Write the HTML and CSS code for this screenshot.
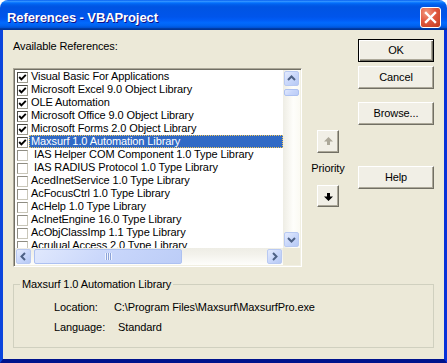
FILE: index.html
```html
<!DOCTYPE html>
<html lang="en">
<head>
    <meta charset="UTF-8">
    <title>References - VBAProject</title>
    <link rel="stylesheet" href="styles.css">
</head>
<body>
    <div class="window">
        <div class="titlebar">
            <span class="title">References - VBAProject</span>
            <button class="close-btn" aria-label="Close">
                <svg width="19" height="19" viewBox="0 0 19 19"><path d="M5 5 L14 14 M14 5 L5 14" stroke="#fff" stroke-width="2.4" stroke-linecap="square"/></svg>
            </button>
        </div>

        <div class="client">
            <div class="top-row">
                <div class="refs-col">
                    <div class="caption">Available References:</div>
                    <div class="listbox">
                        <div class="items">
                            <div class="item"><span class="check on"><svg width="9" height="9" viewBox="0 0 9 9"><polyline points="1.2,4 3.4,6.3 7.8,1.8" fill="none" stroke="#000" stroke-width="1.9"/></svg></span><span class="item-text">Visual Basic For Applications</span></div>
                            <div class="item"><span class="check on"><svg width="9" height="9" viewBox="0 0 9 9"><polyline points="1.2,4 3.4,6.3 7.8,1.8" fill="none" stroke="#000" stroke-width="1.9"/></svg></span><span class="item-text">Microsoft Excel 9.0 Object Library</span></div>
                            <div class="item"><span class="check on"><svg width="9" height="9" viewBox="0 0 9 9"><polyline points="1.2,4 3.4,6.3 7.8,1.8" fill="none" stroke="#000" stroke-width="1.9"/></svg></span><span class="item-text">OLE Automation</span></div>
                            <div class="item"><span class="check on"><svg width="9" height="9" viewBox="0 0 9 9"><polyline points="1.2,4 3.4,6.3 7.8,1.8" fill="none" stroke="#000" stroke-width="1.9"/></svg></span><span class="item-text">Microsoft Office 9.0 Object Library</span></div>
                            <div class="item"><span class="check on"><svg width="9" height="9" viewBox="0 0 9 9"><polyline points="1.2,4 3.4,6.3 7.8,1.8" fill="none" stroke="#000" stroke-width="1.9"/></svg></span><span class="item-text">Microsoft Forms 2.0 Object Library</span></div>
                            <div class="item selected"><span class="check on"><svg width="9" height="9" viewBox="0 0 9 9"><polyline points="1.2,4 3.4,6.3 7.8,1.8" fill="none" stroke="#000" stroke-width="1.9"/></svg></span><span class="item-text">Maxsurf 1.0 Automation Library</span></div>
                            <div class="item"><span class="check"></span><span class="item-text">&nbsp;IAS Helper COM Component 1.0 Type Library</span></div>
                            <div class="item"><span class="check"></span><span class="item-text">&nbsp;IAS RADIUS Protocol 1.0 Type Library</span></div>
                            <div class="item"><span class="check"></span><span class="item-text">AcedInetService 1.0 Type Library</span></div>
                            <div class="item"><span class="check"></span><span class="item-text">AcFocusCtrl 1.0 Type Library</span></div>
                            <div class="item"><span class="check"></span><span class="item-text">AcHelp 1.0 Type Library</span></div>
                            <div class="item"><span class="check"></span><span class="item-text">AcInetEngine 16.0 Type Library</span></div>
                            <div class="item"><span class="check"></span><span class="item-text">AcObjClassImp 1.1 Type Library</span></div>
                            <div class="item"><span class="check"></span><span class="item-text">Acrulual Access 2.0 Type Library</span></div>
                        </div>

                        <div class="vscroll">
                            <div class="sb-btn"><svg width="13" height="13" viewBox="0 0 13 13"><polyline points="3,8 6.5,4.5 10,8" fill="none" stroke="#4d6185" stroke-width="2"/></svg></div>
                            <div class="sb-track"><div class="sb-thumb v-thumb"></div></div>
                            <div class="sb-btn"><svg width="13" height="13" viewBox="0 0 13 13"><polyline points="3,5 6.5,8.5 10,5" fill="none" stroke="#4d6185" stroke-width="2"/></svg></div>
                        </div>

                        <div class="hscroll">
                            <div class="sb-btn"><svg width="13" height="13" viewBox="0 0 13 13"><polyline points="8,3 4.5,6.5 8,10" fill="none" stroke="#4d6185" stroke-width="2"/></svg></div>
                            <div class="sb-track h-track">
                                <div class="sb-thumb h-thumb">
                                    <span class="grip"></span>
                                </div>
                            </div>
                            <div class="sb-btn"><svg width="13" height="13" viewBox="0 0 13 13"><polyline points="5,3 8.5,6.5 5,10" fill="none" stroke="#4d6185" stroke-width="2"/></svg></div>
                        </div>
                        <div class="sb-corner"></div>
                    </div>
                </div>

                <div class="priority-col">
                    <button class="arrow-btn up-btn" disabled>
                        <svg width="9" height="9" viewBox="0 0 9 9"><polygon points="4.5,0 9,4.5 6,4.5 6,8 3,8 3,4.5 0,4.5" fill="#aca899"/></svg>
                    </button>
                    <div class="priority-label">Priority</div>
                    <button class="arrow-btn down-btn">
                        <svg width="9" height="9" viewBox="0 0 9 9"><polygon points="4.5,9 9,4.5 6,4.5 6,1 3,1 3,4.5 0,4.5" fill="#000"/></svg>
                    </button>
                </div>

                <div class="buttons-col">
                    <button class="btn default">OK</button>
                    <button class="btn cancel">Cancel</button>
                    <button class="btn browse">Browse...</button>
                    <button class="btn help">Help</button>
                </div>
            </div>

            <fieldset class="details">
                <legend>Maxsurf 1.0 Automation Library</legend>
                <div class="detail-row">
                    <span class="detail-label">Location:</span>
                    <span class="detail-value">C:\Program Files\Maxsurf\MaxsurfPro.exe</span>
                </div>
                <div class="detail-row">
                    <span class="detail-label">Language:</span>
                    <span class="detail-value lang">Standard</span>
                </div>
            </fieldset>
        </div>
    </div>
</body>
</html>
```

FILE: styles.css
```css
body {
    margin: 0;
    background-color: #fff;
    font-family: "Liberation Sans", Arial, sans-serif;
    font-size: 11px;
    letter-spacing: -0.1px;
    color: #000;
}
button {
    font-family: inherit;
    font-size: inherit;
    letter-spacing: inherit;
    color: inherit;
    padding: 0;
}
.window {
    width: 447px;
    height: 363px;
    display: flex;
    flex-direction: column;
}
.titlebar {
    height: 30px;
    flex: none;
    display: flex;
    justify-content: space-between;
    align-items: flex-start;
    padding: 0 6px 0 7px;
    border-radius: 8px 8px 0 0;
    background: linear-gradient(to bottom, #0058ee 0%, #3593ff 4%, #288eff 6%, #127dff 8%, #036ffc 10%, #0262ee 14%, #0057e5 20%, #0054e3 24%, #0055eb 56%, #005bf5 66%, #026afe 76%, #0062ef 86%, #0052d6 92%, #0040ab 94%, #003092 100%);
}
.title {
    margin-top: 10px;
    line-height: 15px;
    font-size: 13px;
    font-weight: bold;
    letter-spacing: -0.1px;
    color: #fff;
    text-shadow: 1px 1px #0f1089;
}
.close-btn {
    margin-top: 7px;
    width: 21px;
    height: 21px;
    border: 1px solid #fff;
    border-radius: 3px;
    background: radial-gradient(circle at 30% 25%, #f29a80 0%, #e1583f 45%, #c23b1c 100%);
    display: flex;
    align-items: center;
    justify-content: center;
}
.client {
    flex: 1;
    background-color: #ece9d8;
    border-style: solid;
    border-width: 0 3px 4px 3px;
    border-color: #0b45dd #0831d9 #00138c #0b45dd;
    padding: 9px 10px 0 10px;
}
.top-row {
    display: flex;
}
.refs-col {
    width: 289px;
}
.caption {
    margin-top: 1px;
    line-height: 13px;
    margin-bottom: 15px;
}

/* list box with sunken 3d border */
.listbox {
    height: 199px;
    box-sizing: border-box;
    border: 1px solid;
    border-color: #aca899 #fff #fff #aca899;
    box-shadow: inset 1px 1px #716f64, inset -1px -1px #f1efe2;
    padding: 1px;
    background-color: #fff;
    display: grid;
    grid-template-columns: 1fr 17px;
    grid-template-rows: 1fr 17px;
}
.items {
    overflow: hidden;
    white-space: nowrap;
}
.item {
    height: 13px;
    line-height: 13px;
    display: flex;
    align-items: flex-start;
    padding-left: 2px;
}
.check {
    flex: none;
    width: 11px;
    height: 11px;
    box-sizing: border-box;
    margin-top: 2px;
    margin-right: 1px;
    border: 1px solid;
    border-color: #8e8d83 #c9c7ba #c9c7ba #8e8d83;
    background-color: #fff;
    display: flex;
    align-items: center;
    justify-content: center;
}
.check.on {
    border-color: #4a4a44 #9d9b8f #9d9b8f #4a4a44;
}
.item-text {
    flex: 1;
    padding-left: 2px;
}
.item.selected .item-text {
    background-color: #316ac5;
    color: #fff;
    outline: 1px dotted #f4c85a;
    outline-offset: -1px;
}

/* xp scroll bars */
.vscroll {
    display: flex;
    flex-direction: column;
    background: linear-gradient(to right, #eeede5 0%, #f6f5ef 30%, #fefefb 60%, #fbfaf3 100%);
}
.hscroll {
    display: flex;
    background: linear-gradient(to bottom, #eeede5 0%, #f3f2ec 40%, #fefefb 100%);
}
.sb-corner {
    background-color: #ece9d8;
}
.sb-btn {
    flex: none;
    width: 15px;
    height: 15px;
    margin: 1px;
    box-sizing: border-box;
    border: 1px solid #b8c9f2;
    border-radius: 2px;
    background: linear-gradient(135deg, #e4ebfd 0%, #cad8fb 50%, #b6c9f4 100%);
    display: flex;
    align-items: center;
    justify-content: center;
}
.sb-track {
    flex: 1;
    display: flex;
}
.vscroll .sb-track {
    flex-direction: column;
}
.sb-thumb {
    box-sizing: border-box;
    border: 1px solid #adc1f1;
    border-radius: 2px;
    background: linear-gradient(135deg, #e0e8fd 0%, #c8d6fb 50%, #bccdf7 100%);
}
.v-thumb {
    height: 7px;
    margin: 2px 1px 0 1px;
}
.h-thumb {
    width: 148px;
    margin: 1px 0 1px 2px;
    display: flex;
    align-items: center;
    justify-content: center;
}
.grip {
    width: 7px;
    height: 7px;
    background: repeating-linear-gradient(to right, #eef3fe 0, #eef3fe 1px, #8ca3d9 1px, #8ca3d9 2px);
}

/* priority arrows */
.priority-col {
    width: 40px;
    margin-left: 6px;
    display: flex;
    flex-direction: column;
    align-items: center;
}
.arrow-btn {
    width: 22px;
    height: 23px;
    display: flex;
    align-items: center;
    justify-content: center;
}
.up-btn {
    margin-top: 91px;
}
.priority-label {
    margin-top: 9px;
    line-height: 13px;
    white-space: nowrap;
}
.down-btn {
    margin-top: 10px;
    height: 22px;
}

/* push buttons */
.buttons-col {
    width: 76px;
    margin-left: 10px;
    display: flex;
    flex-direction: column;
}
.btn, .arrow-btn {
    box-sizing: border-box;
    border: 1px solid;
    border-color: #fff #716f64 #716f64 #fff;
    box-shadow: inset -1px -1px #aca899;
    background-color: #f1efe6;
}
.btn {
    height: 23px;
    line-height: 13px;
}
.btn.default {
    border: 1px solid #000;
    box-shadow: inset 1px 1px #fff, inset -1px -1px #716f64, inset -2px -2px #aca899;
}
.cancel {
    margin-top: 4px;
}
.browse {
    margin-top: 13px;
}
.help {
    margin-top: 41px;
}

/* details group box */
.details {
    width: 421px;
    height: 70px;
    box-sizing: border-box;
    margin: 11px 0 0 0;
    padding: 0 6px;
    border: 1px solid #d0d0bf;
}
.details legend {
    padding: 0 2px;
    line-height: 13px;
}
.detail-row {
    display: flex;
    line-height: 13px;
    padding-left: 34px;
    margin-top: 7px;
}
.detail-row:first-of-type {
    margin-top: 10px;
}
.detail-label {
    width: 60px;
}
.detail-value.lang {
    margin-left: 4px;
}
```
